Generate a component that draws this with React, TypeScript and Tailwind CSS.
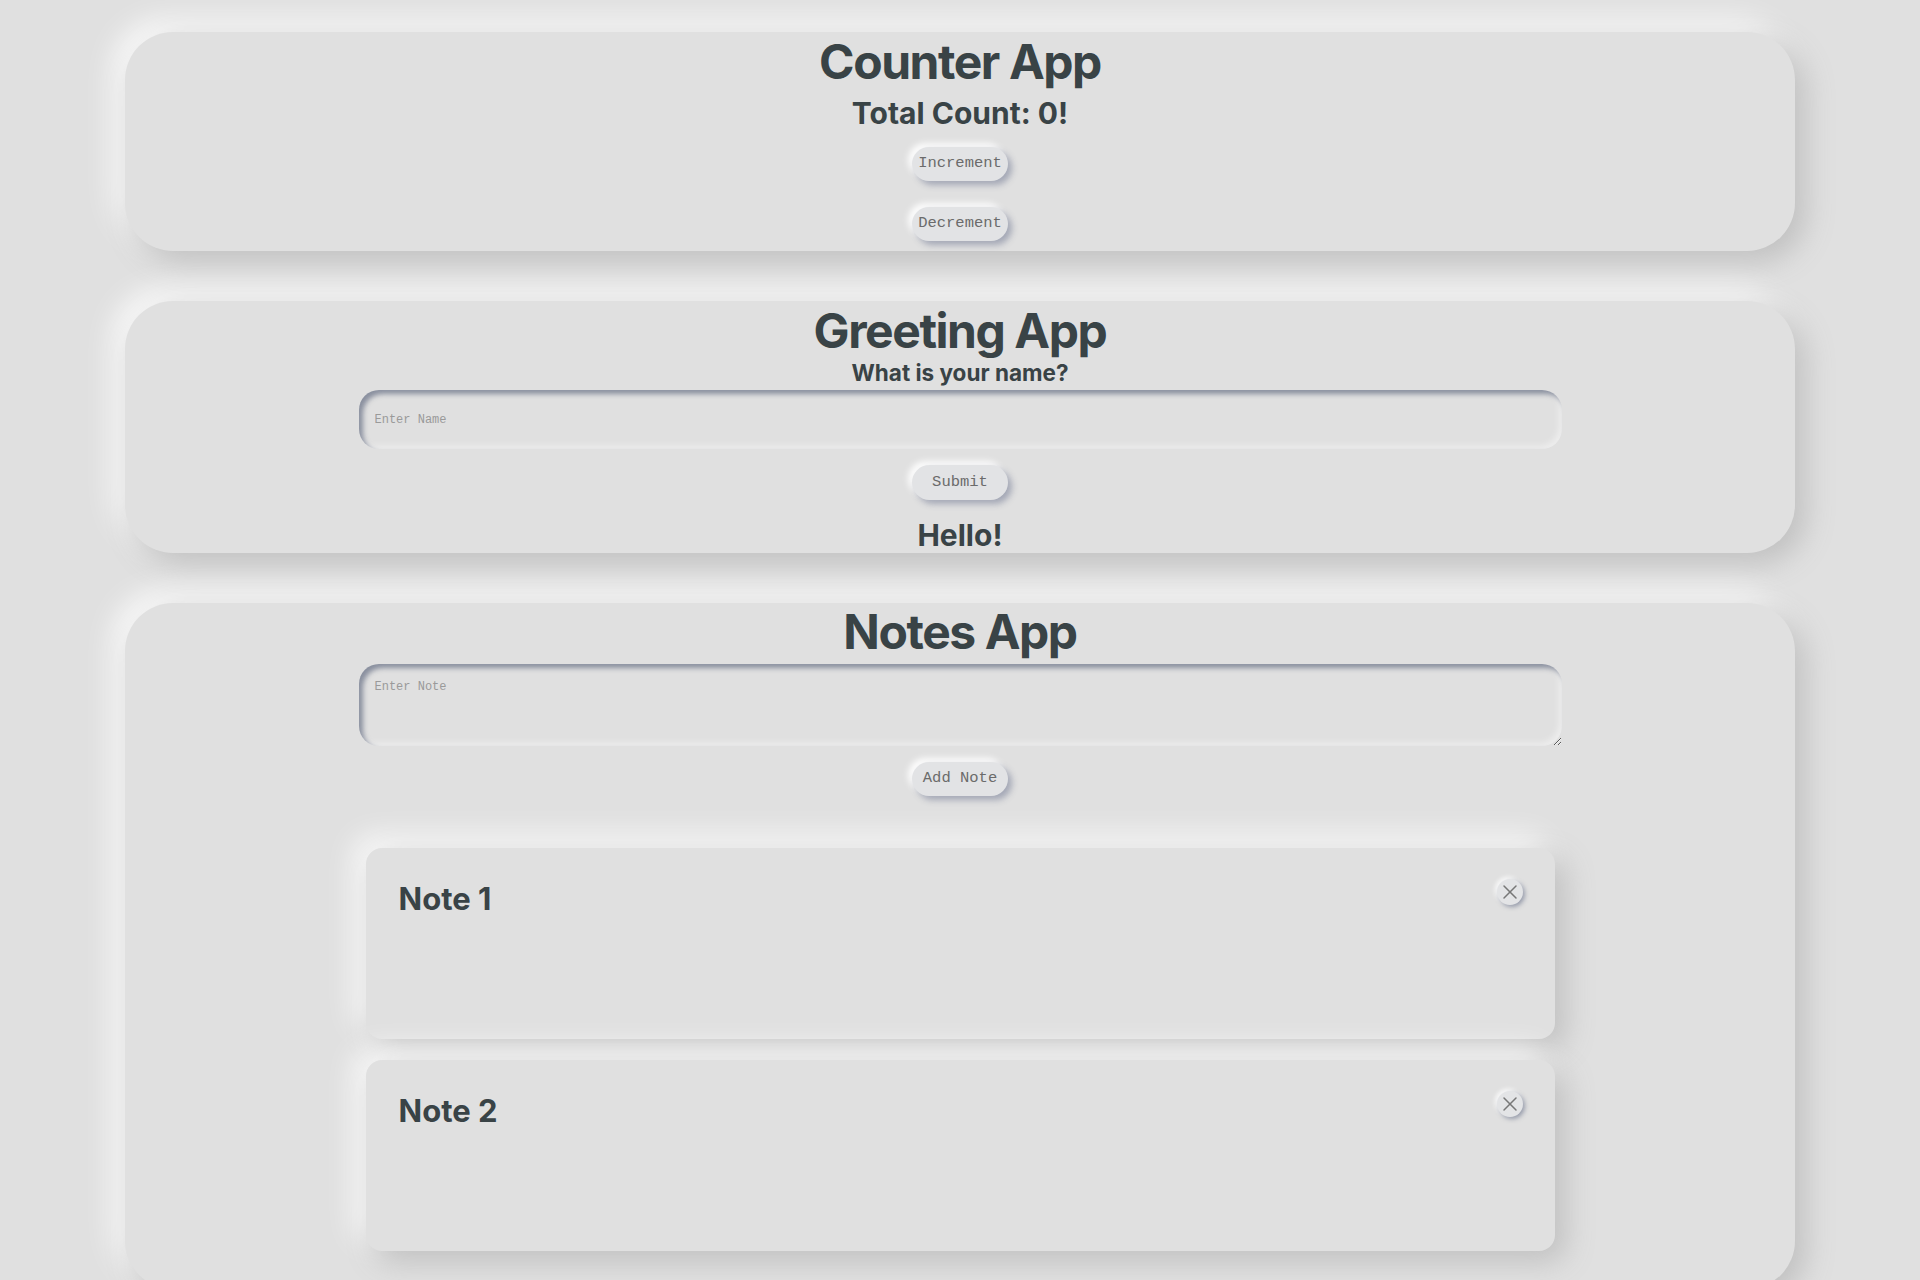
import { useState } from "react";
import { X } from "lucide-react";

const heading = "font-['Inter',sans-serif] font-bold text-[#394346]";
const neoBtn =
  "w-24 h-[34px] rounded-full bg-[#e2e3e5] text-[#6b6b6b] text-[15.5px] font-['Liberation_Mono',monospace] shadow-[4px_4px_6px_rgba(90,100,130,0.45),-4px_-4px_6px_rgba(255,255,255,0.9)]";
const neoCard =
  "w-[1670px] rounded-[48px] bg-[#e0e0e0] flex flex-col items-center shadow-[10px_10px_30px_#bebebe,-10px_-10px_30px_#ffffff]";
const neoInset =
  "w-[1203px] rounded-[20px] bg-[#e0e0e0] outline-none px-[16px] text-[12px] text-[#555] placeholder:text-[#9a9a9a] font-['Liberation_Mono',monospace] shadow-[inset_4px_4px_5px_rgba(80,90,115,0.6),inset_-3px_-3px_6px_rgba(255,255,255,0.45)]";

export default function App() {
  const [count, setCount] = useState(0);
  const [name, setName] = useState("");
  const [greeting, setGreeting] = useState("");
  const [draft, setDraft] = useState("");
  const [notes, setNotes] = useState<string[]>(["Note 1", "Note 2"]);

  return (
    <div className="min-h-screen bg-[#e0e0e0] flex flex-col items-center pt-[32px] pb-[60px] gap-[50px]">
      {/* Counter */}
      <section className={`${neoCard} pt-[6px] pb-[10px]`}>
        <h1 className={`${heading} text-[48px] leading-none tracking-[-0.03em]`}>Counter App</h1>
        <h2 className={`${heading} text-[30px] leading-[36px] mt-[9px]`}>Total Count: {count}!</h2>
        <button className={`${neoBtn} mt-[16px]`} onClick={() => setCount(count + 1)}>Increment</button>
        <button className={`${neoBtn} mt-[26px]`} onClick={() => setCount(count - 1)}>Decrement</button>
      </section>

      {/* Greeting */}
      <section className={`${neoCard} pt-[6px]`}>
        <h1 className={`${heading} text-[48px] leading-none tracking-[-0.03em]`}>Greeting App</h1>
        <h3 className={`${heading} text-[22.5px] leading-[32px] mt-[2px]`}>What is your name?</h3>
        <input
          className={`${neoInset} h-[59px] mt-[1px]`}
          placeholder="Enter Name"
          value={name}
          onChange={e => setName(e.target.value)}
        />
        <button className={`${neoBtn} mt-[16px] h-[35px]`} onClick={() => setGreeting(name)}>Submit</button>
        <h2 className={`${heading} text-[30px] leading-[36px] mt-[17px]`}>Hello{greeting ? ` ${greeting}` : ""}!</h2>
      </section>

      {/* Notes */}
      <section className={`${neoCard} pt-[5px] pb-[38px]`}>
        <h1 className={`${heading} text-[48px] leading-none tracking-[-0.03em]`}>Notes App</h1>
        <textarea
          className={`${neoInset} h-[82px] mt-[8px] pt-[14px]`}
          placeholder="Enter Note"
          value={draft}
          onChange={e => setDraft(e.target.value)}
        />
        <button
          className={`${neoBtn} mt-[16px] h-[33px]`}
          onClick={() => { if (draft.trim()) { setNotes([...notes, draft]); setDraft(""); } }}
        >
          Add Note
        </button>
        <div className="flex flex-col gap-[21px] mt-[52px]">
          {notes.map((n, i) => (
            <div
              key={i}
              className="relative w-[1189px] h-[191px] rounded-[16px] bg-[#e0e0e0] pt-[33px] px-[33px] shadow-[10px_10px_30px_#bebebe,-10px_-10px_30px_#ffffff]"
            >
              <h2 className={`${heading} text-[31px] leading-[36px]`}>{n}</h2>
              <button
                className="absolute top-[31px] right-[32px] w-[26px] h-[26px] rounded-full bg-[#e3e4e6] flex items-center justify-center text-[#777] shadow-[2px_2px_4px_rgba(80,90,120,0.5),-2px_-2px_4px_rgba(255,255,255,0.9)]"
                onClick={() => setNotes(notes.filter((_, j) => j !== i))}
              >
                <X size={24} strokeWidth={1.5} />
              </button>
            </div>
          ))}
        </div>
      </section>
    </div>
  );
}
